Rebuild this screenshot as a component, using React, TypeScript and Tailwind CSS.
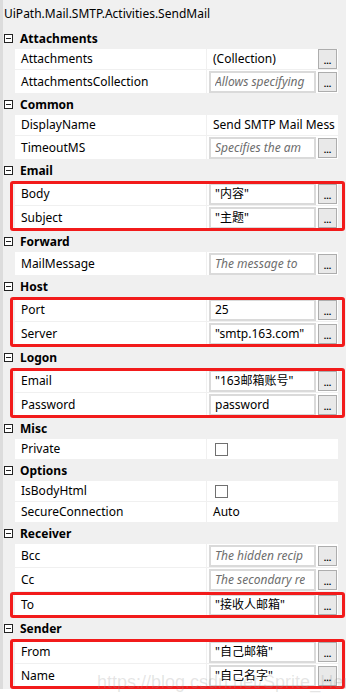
import React from "react";

type Value =
  | { kind: "text"; text: string }
  | { kind: "input"; text: string }
  | { kind: "hint"; text: string }
  | { kind: "check" };

interface Prop {
  name: string;
  value: Value;
  button?: boolean;
}

interface Group {
  marked?: boolean;
  rows: Prop[];
}

interface Category {
  title: string;
  groups: Group[];
}

const data: Category[] = [
  {
    title: "Attachments",
    groups: [
      {
        rows: [
          { name: "Attachments", value: { kind: "text", text: "(Collection)" }, button: true },
          { name: "AttachmentsCollection", value: { kind: "hint", text: "Allows specifying" }, button: true },
        ],
      },
    ],
  },
  {
    title: "Common",
    groups: [
      {
        rows: [
          { name: "DisplayName", value: { kind: "text", text: "Send SMTP Mail Mess" } },
          { name: "TimeoutMS", value: { kind: "hint", text: "Specifies the am" }, button: true },
        ],
      },
    ],
  },
  {
    title: "Email",
    groups: [
      {
        marked: true,
        rows: [
          { name: "Body", value: { kind: "input", text: "\"内容\"" }, button: true },
          { name: "Subject", value: { kind: "input", text: "\"主题\"" }, button: true },
        ],
      },
    ],
  },
  {
    title: "Forward",
    groups: [{ rows: [{ name: "MailMessage", value: { kind: "hint", text: "The message to" }, button: true }] }],
  },
  {
    title: "Host",
    groups: [
      {
        marked: true,
        rows: [
          { name: "Port", value: { kind: "input", text: "25" }, button: true },
          { name: "Server", value: { kind: "input", text: "\"smtp.163.com\"" }, button: true },
        ],
      },
    ],
  },
  {
    title: "Logon",
    groups: [
      {
        marked: true,
        rows: [
          { name: "Email", value: { kind: "input", text: "\"163邮箱账号\"" }, button: true },
          { name: "Password", value: { kind: "input", text: "password" }, button: true },
        ],
      },
    ],
  },
  {
    title: "Misc",
    groups: [{ rows: [{ name: "Private", value: { kind: "check" } }] }],
  },
  {
    title: "Options",
    groups: [
      {
        rows: [
          { name: "IsBodyHtml", value: { kind: "check" } },
          { name: "SecureConnection", value: { kind: "text", text: "Auto" } },
        ],
      },
    ],
  },
  {
    title: "Receiver",
    groups: [
      {
        rows: [
          { name: "Bcc", value: { kind: "hint", text: "The hidden recip" }, button: true },
          { name: "Cc", value: { kind: "hint", text: "The secondary re" }, button: true },
        ],
      },
      { marked: true, rows: [{ name: "To", value: { kind: "input", text: "\"接收人邮箱\"" }, button: true }] },
    ],
  },
  {
    title: "Sender",
    groups: [
      {
        marked: true,
        rows: [
          { name: "From", value: { kind: "input", text: "\"自己邮箱\"" }, button: true },
          { name: "Name", value: { kind: "input", text: "\"自己名字\"" }, button: true },
        ],
      },
    ],
  },
];

const font = { fontFamily: "'Noto Sans', 'Noto Sans CJK SC', sans-serif" };

function Collapse() {
  return (
    <span className="flex h-[9px] w-[9px] items-center justify-center border border-[#222] bg-white">
      <span className="h-px w-[5px] bg-[#222]" />
    </span>
  );
}

function Dots() {
  return (
    <div className="flex h-[20px] w-[19px] shrink-0 items-end justify-center border border-[#adadad] bg-[#e9e9e9] pb-[3px] text-[9px] font-bold leading-none text-black">
      ...
    </div>
  );
}

function Cell({ value }: { value: Value }) {
  if (value.kind === "check") {
    return <span className="ml-[6px] block h-[13px] w-[13px] border border-[#707070] bg-white" />;
  }
  if (value.kind === "text") {
    return <span className="overflow-hidden whitespace-nowrap pl-[4px] text-[12px] text-black">{value.text}</span>;
  }
  return (
    <div className="flex h-[22px] w-[107px] shrink-0 items-center overflow-hidden border-2 border-[#dadada] bg-white pl-[4px]">
      <span
        className={
          value.kind === "hint"
            ? "overflow-hidden whitespace-nowrap text-[12px] italic text-[#6d6d6d]"
            : "whitespace-nowrap text-[12px] text-black"
        }
      >
        {value.text}
      </span>
    </div>
  );
}

function Row({ row }: { row: Prop }) {
  const tall = row.value.kind === "input" || row.value.kind === "hint";
  return (
    <div className={tall ? "flex h-[24px] border-b border-[#f0f0f0]" : "flex h-[21px] border-b border-[#f0f0f0]"}>
      <div className="flex w-[192px] shrink-0 items-center border-r border-[#f0f0f0] bg-white pl-[6px] text-[12px] text-black">
        {row.name}
      </div>
      <div className="flex min-w-0 flex-1 items-center gap-[2px] bg-white pl-[2px] pr-px">
        <div className="flex min-w-0 flex-1 items-center overflow-hidden">
          <Cell value={row.value} />
        </div>
        {row.button && <Dots />}
      </div>
    </div>
  );
}

export default function App() {
  return (
    <div className="relative h-[699px] w-[346px] overflow-hidden bg-white" style={font}>
      <div className="flex flex-col border-l-[3px] border-[#dcdcdc] bg-[#f0f0f0] pr-[8px]">
        <div className="flex h-[28px] shrink-0 items-center pl-[1px] text-[12px] text-black">
          UiPath.Mail.SMTP.Activities.SendMail
        </div>
        {data.map((cat) => (
          <div key={cat.title}>
            <div className="flex h-[21px] items-center gap-[7px] pl-[1px] text-[12px] font-bold text-black">
              <Collapse />
              {cat.title}
            </div>
            {cat.groups.map((g, i) => (
              <div key={i} className={g.marked ? "relative py-px pl-[12px]" : "pl-[12px]"}>
                {g.rows.map((r) => (
                  <Row key={r.name} row={r} />
                ))}
                {g.marked && (
                  <div className="pointer-events-none absolute -right-[7px] bottom-0 left-[7px] top-0 rounded-[3px] border-[3px] border-[#f21b1b]" />
                )}
              </div>
            ))}
          </div>
        ))}
      </div>
      <div className="pointer-events-none absolute left-[97px] top-[669px] whitespace-nowrap text-[18px] text-[rgba(150,150,150,0.25)]" style={{ fontFamily: "'Liberation Sans', sans-serif" }}>
        https://blog.csdn.net/Sprite_Henry
      </div>
    </div>
  );
}
